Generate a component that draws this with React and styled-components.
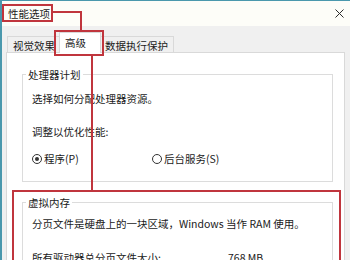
import React from "react";
import styled, { createGlobalStyle } from "styled-components";

const Global = createGlobalStyle`
  html, body { margin: 0; padding: 0; overflow: hidden; background: #f0f0f0; }
  body { font-family: "Noto Sans CJK SC", "Noto Sans", sans-serif; font-size: 10.5px; color: #1a1a1a; }
`;

const Window = styled.div`
  position: relative;
  width: 350px;
  height: 260px;
  box-sizing: border-box;
  border-top: 1px solid #4a98ad;
  border-left: 2px solid #4a98ad;
  background: #f0f0f0;
  overflow: hidden;
  display: flex;
  flex-direction: column;
`;

const TitleBar = styled.div`
  height: 25px;
  flex: none;
  background: #fdfdf8;
  display: flex;
  align-items: center;
  justify-content: space-between;
  padding: 0 5px 0 6px;
  line-height: 14px;
`;

const CloseBtn = styled.svg`
  width: 9px;
  height: 9px;
  margin-right: 1px;
`;

const TabStrip = styled.div`
  height: 27px;
  flex: none;
  display: flex;
  align-items: flex-end;
  padding-left: 5px;
  background: #f0f0f0;
`;

const Tab = styled.div`
  position: relative;
  height: ${(p) => (p.$active ? 21 : 17)}px;
  line-height: ${(p) => (p.$active ? 19 : 17)}px;
  box-sizing: border-box;
  border: 1px solid #d9d9d9;
  border-bottom: ${(p) => (p.$active ? "none" : "1px solid #d9d9d9")};
  background: ${(p) => (p.$active ? "#ffffff" : "#f0f0f0")};
  padding: ${(p) => (p.$active ? "0 14px 0 5px" : "0 5px")};
  margin: ${(p) => (p.$active ? "0 -2px" : "0")};
  z-index: ${(p) => (p.$active ? 2 : 1)};
  white-space: nowrap;
`;

const Panel = styled.div`
  flex: 1;
  margin: -1px 5px 0 4px;
  background: #ffffff;
  border: 1px solid #d9d9d9;
  border-bottom: none;
  padding: 21px 11px 0 15px;
  display: flex;
  flex-direction: column;
  gap: 20px;
`;

const Group = styled.div`
  box-sizing: border-box;
  border: 1px solid #dcdcdc;
  height: ${(p) => p.$h || "auto"};
  padding: 0 8px 0 9px;
  display: flex;
  flex-direction: column;
  flex: none;
`;

const Legend = styled.div`
  align-self: flex-start;
  margin: -7px 0 0 -6px;
  padding: 0 2px;
  background: #ffffff;
  line-height: 14px;
  height: 14px;
`;

const Line = styled.div`
  line-height: 14px;
  height: 14px;
  margin-top: ${(p) => p.$mt}px;
  white-space: nowrap;
`;

const RadioRow = styled.div`
  display: grid;
  grid-template-columns: 120px auto;
  margin-top: 13px;
  line-height: 14px;
`;

const RadioItem = styled.div`
  display: flex;
  align-items: center;
  gap: 2px;
`;

const RadioCircle = styled.span`
  width: 10px;
  height: 10px;
  box-sizing: border-box;
  border: 1px solid #333;
  border-radius: 50%;
  display: inline-flex;
  align-items: center;
  justify-content: center;
  &::after {
    content: "";
    width: 4px;
    height: 4px;
    border-radius: 50%;
    background: ${(p) => (p.$checked ? "#333" : "transparent")};
  }
`;

const SizeRow = styled.div`
  display: grid;
  grid-template-columns: 196px auto;
  line-height: 14px;
  margin-top: 20px;
  white-space: nowrap;
`;

const Mark = styled.div`
  position: absolute;
  box-sizing: border-box;
  border: 2px solid #c0353d;
  z-index: 5;
  pointer-events: none;
`;

const HLine = styled.div`
  position: absolute;
  height: 2px;
  background: #c0353d;
  z-index: 5;
`;

const VLine = styled.div`
  position: absolute;
  width: 2px;
  background: #c0353d;
  z-index: 5;
`;

export default function App() {
  return (
    <>
      <Global />
      <Window>
        <TitleBar>
          <span>性能选项</span>
          <CloseBtn viewBox="0 0 9 9">
            <path d="M0.5 0.5 L8.5 8.5 M8.5 0.5 L0.5 8.5" stroke="#2b2b2b" strokeWidth="1" />
          </CloseBtn>
        </TitleBar>
        <TabStrip>
          <Tab>视觉效果</Tab>
          <Tab $active>高级</Tab>
          <Tab>数据执行保护</Tab>
        </TabStrip>
        <Panel>
          <Group $h="108px">
            <Legend>处理器计划</Legend>
            <Line $mt={10}>选择如何分配处理器资源。</Line>
            <Line $mt={19}>调整以优化性能:</Line>
            <RadioRow>
              <RadioItem>
                <RadioCircle $checked />
                <span>程序(P)</span>
              </RadioItem>
              <RadioItem>
                <RadioCircle />
                <span>后台服务(S)</span>
              </RadioItem>
            </RadioRow>
          </Group>
          <Group $h="120px">
            <Legend>虚拟内存</Legend>
            <Line $mt={7}>分页文件是硬盘上的一块区域，Windows 当作 RAM 使用。</Line>
            <SizeRow>
              <span>所有驱动器总分页文件大小:</span>
              <span>768 MB</span>
            </SizeRow>
          </Group>
        </Panel>

        <Mark style={{ left: 0, top: 3, width: 51, height: 18 }} />
        <HLine style={{ left: 49, top: 10, width: 31 }} />
        <VLine style={{ left: 78, top: 10, height: 20 }} />
        <Mark style={{ left: 52, top: 29, width: 50, height: 26 }} />
        <VLine style={{ left: 89, top: 55, height: 135 }} />
        <Mark style={{ left: 10, top: 189, width: 329, height: 90 }} />
      </Window>
    </>
  );
}
